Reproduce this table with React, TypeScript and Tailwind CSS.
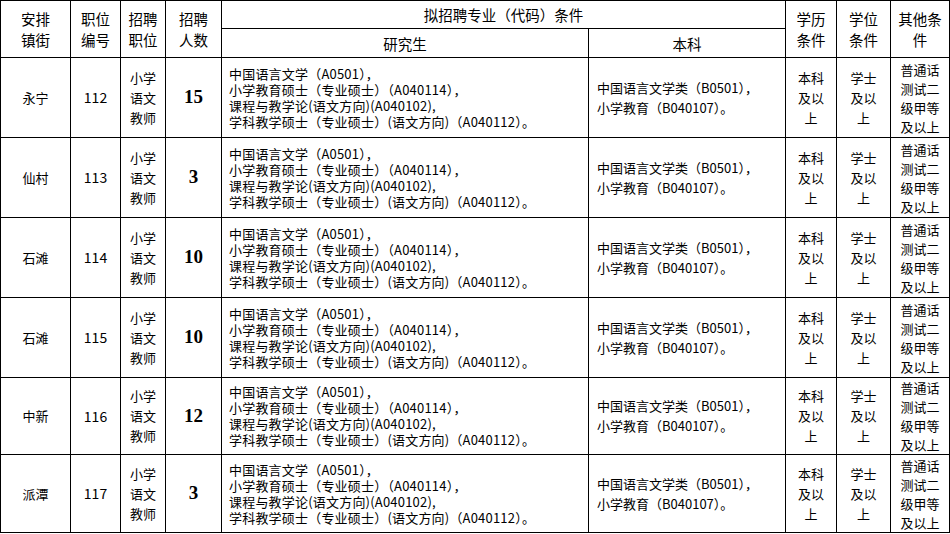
const rows = [
  { town: "永宁", code: "112", count: "15", h: "h-[80px]" },
  { town: "仙村", code: "113", count: "3", h: "h-[80px]" },
  { town: "石滩", code: "114", count: "10", h: "h-[80px]" },
  { town: "石滩", code: "115", count: "10", h: "h-[80px]" },
  { town: "中新", code: "116", count: "12", h: "h-[76px]" },
  { town: "派潭", code: "117", count: "3", h: "h-[78px]" },
];

const grad = [
  "中国语言文学（A0501），",
  "小学教育硕士（专业硕士）（A040114），",
  "课程与教学论(语文方向)(A040102),",
  "学科教学硕士（专业硕士）(语文方向)（A040112）。",
];

const under = ["中国语言文学类（B0501），", "小学教育（B040107）。"];

const cell = "border border-black p-0 align-middle";
const head = "border border-black p-0 text-center align-middle text-[14.5px] leading-[21px] font-normal";

export default function App() {
  return (
    <div className="w-[950px] h-[534px] bg-white text-black font-['Noto_Sans_CJK_SC',sans-serif]">
      <table className="table-fixed border-collapse w-[949px]">
        <colgroup>
          <col className="w-[70px]" />
          <col className="w-[50px]" />
          <col className="w-[45px]" />
          <col className="w-[56px]" />
          <col className="w-[367px]" />
          <col className="w-[197px]" />
          <col className="w-[51px]" />
          <col className="w-[54px]" />
          <col className="w-[59px]" />
        </colgroup>
        <thead>
          <tr className="h-[28px]">
            <th rowSpan={2} className={head}>安排<br />镇街</th>
            <th rowSpan={2} className={head}>职位<br />编号</th>
            <th rowSpan={2} className={head}>招聘<br />职位</th>
            <th rowSpan={2} className={head}>招聘<br />人数</th>
            <th colSpan={2} className={head}>拟招聘专业（代码）条件</th>
            <th rowSpan={2} className={head}>学历<br />条件</th>
            <th rowSpan={2} className={head}>学位<br />条件</th>
            <th rowSpan={2} className={head}>其他条<br />件</th>
          </tr>
          <tr className="h-[29px]">
            <th className={head}>研究生</th>
            <th className={head}>本科</th>
          </tr>
        </thead>
        <tbody className="text-[13px]">
          {rows.map((r, i) => (
            <tr key={i} className={r.h}>
              <td className={cell + " text-center"}>{r.town}</td>
              <td className={cell + " text-center text-[14px]"}>{r.code}</td>
              <td className={cell + " text-center leading-[20px]"}>小学<br />语文<br />教师</td>
              <td className={cell + " text-center font-['Liberation_Serif',serif] font-bold text-[19px]"}>{r.count}</td>
              <td className={cell + " pl-[7px] leading-[16px] tracking-[0.2px]"}>
                {grad.map((g) => (
                  <div key={g} className="whitespace-nowrap">{g}</div>
                ))}
              </td>
              <td className={cell + " pl-[8px] leading-[20px]"}>
                {under.map((u) => (
                  <div key={u} className="whitespace-nowrap">{u}</div>
                ))}
              </td>
              <td className={cell + " text-center leading-[20px]"}>本科<br />及以<br />上</td>
              <td className={cell + " text-center leading-[20px]"}>学士<br />及以<br />上</td>
              <td className={cell + " text-center leading-[19px]"}>普通话<br />测试二<br />级甲等<br />及以上</td>
            </tr>
          ))}
        </tbody>
      </table>
    </div>
  );
}
